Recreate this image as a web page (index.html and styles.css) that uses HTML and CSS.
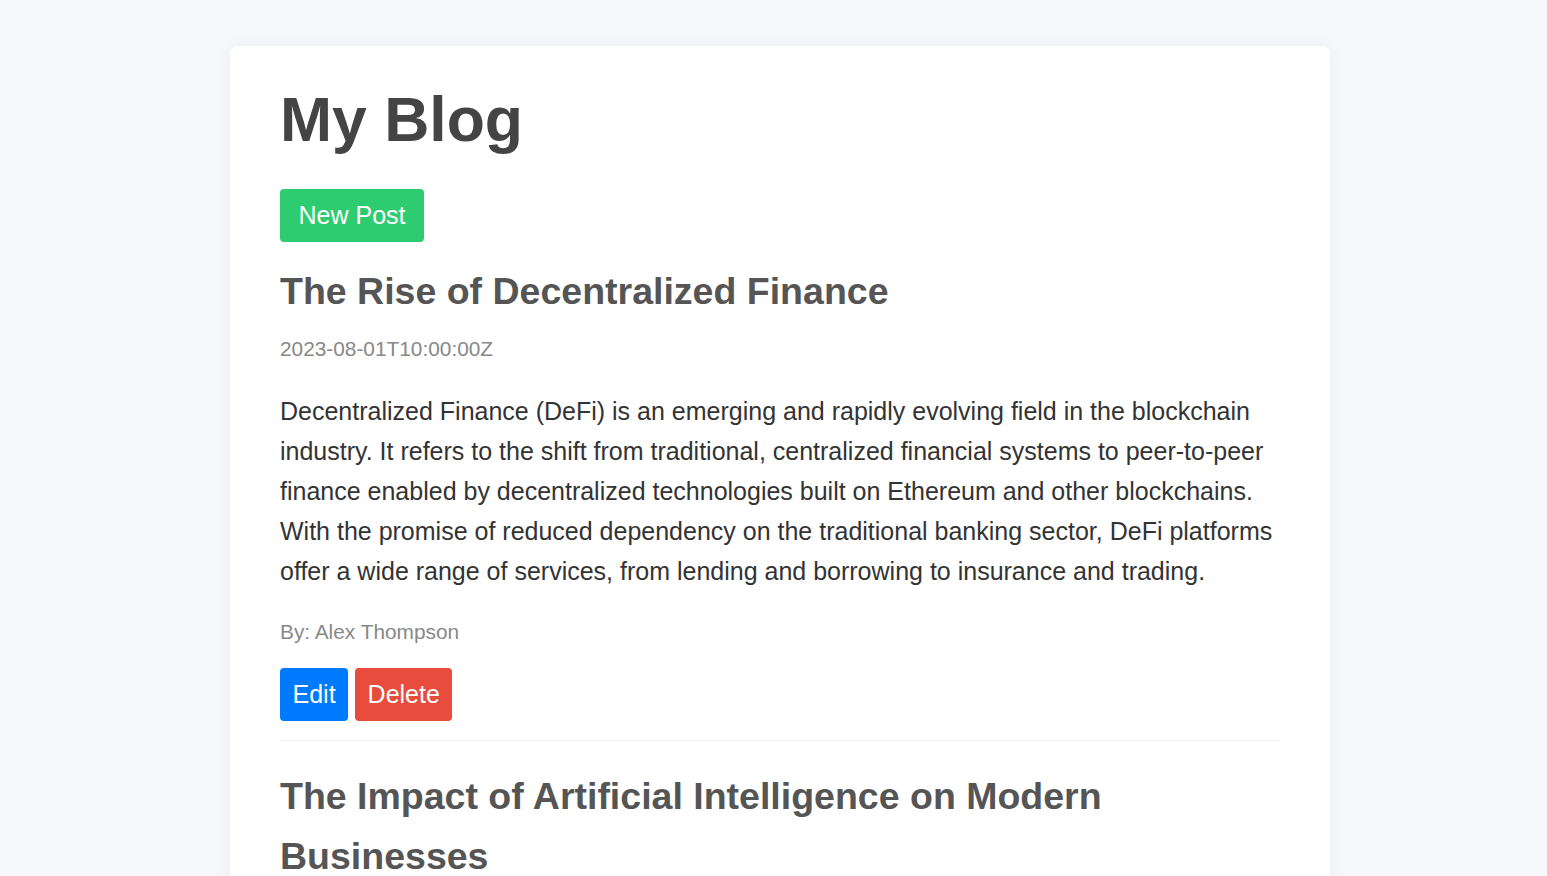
FILE: index.html
```html
<!DOCTYPE html>
<html lang="en">
<head>
<meta charset="utf-8">
<title>My Blog</title>
<link rel="stylesheet" href="styles.css">
</head>
<body>
<div class="container">
  <h1 class="page-title">My Blog</h1>
  <button class="btn btn-new">New Post</button>
  <div class="post">
    <h2 class="post-title">The Rise of Decentralized Finance</h2>
    <p class="post-date">2023-08-01T10:00:00Z</p>
    <p class="post-body">Decentralized Finance (DeFi) is an emerging and rapidly evolving field in the blockchain industry. It refers to the shift from traditional, centralized financial systems to peer-to-peer finance enabled by decentralized technologies built on Ethereum and other blockchains. With the promise of reduced dependency on the traditional banking sector, DeFi platforms offer a wide range of services, from lending and borrowing to insurance and trading.</p>
    <p class="post-author">By: Alex Thompson</p>
    <div class="actions">
      <button class="btn btn-edit">Edit</button>
      <button class="btn btn-delete">Delete</button>
    </div>
  </div>
  <div class="post">
    <h2 class="post-title">The Impact of Artificial Intelligence on Modern Businesses</h2>
    <p class="post-date">2023-08-05T14:30:00Z</p>
    <p class="post-body">Artificial Intelligence (AI) is transforming the way businesses operate across every industry.</p>
  </div>
</div>
</body>
</html>
```

FILE: styles.css
```css
html, body {
  margin: 0;
  padding: 0;
}
body {
  background: #f7f8fc;
  font-family: "Liberation Sans", Arial, sans-serif;
  color: #333;
}
.container {
  width: 1100px;
  box-sizing: border-box;
  margin: 46px 0 0 230px;
  padding: 37px 50px 40px;
  background: #fff;
  border-radius: 8px;
  box-shadow: 0 0 20px rgba(0, 0, 0, 0.05);
}
.page-title {
  margin: 0;
  font-size: 62.5px;
  line-height: normal;
  font-weight: bold;
  color: #444;
}
.btn {
  display: inline-block;
  border: none;
  border-radius: 4px;
  color: #fff;
  font-family: "Liberation Sans", Arial, sans-serif;
  font-size: 25px;
  line-height: normal;
  padding: 12px 12.5px;
  cursor: pointer;
}
.btn-new {
  margin-top: 34px;
  padding: 12px 18.5px;
  background: #2ecc71;
}
.btn-edit {
  background: #007bff;
}
.btn-delete {
  background: #e74c3c;
}
.post {
  padding-bottom: 19px;
  border-bottom: 1px solid #eee;
}
.post + .post {
  margin-top: 25px;
}
.post:first-of-type {
  margin-top: 19px;
}
.post-title {
  margin: 0;
  font-size: 37.5px;
  line-height: 60px;
  font-weight: bold;
  color: #555;
}
.post-date {
  margin: 10.5px 0 0;
  font-size: 20.83px;
  line-height: 33.33px;
  color: #888;
}
.post-body {
  margin: 26.5px 0 0;
  font-size: 25px;
  line-height: 40px;
  color: #333;
}
.post-author {
  margin: 24px 0 0;
  font-size: 20.83px;
  line-height: 33.33px;
  color: #888;
}
.actions {
  display: flex;
  gap: 7px;
  margin-top: 19.5px;
}
```
